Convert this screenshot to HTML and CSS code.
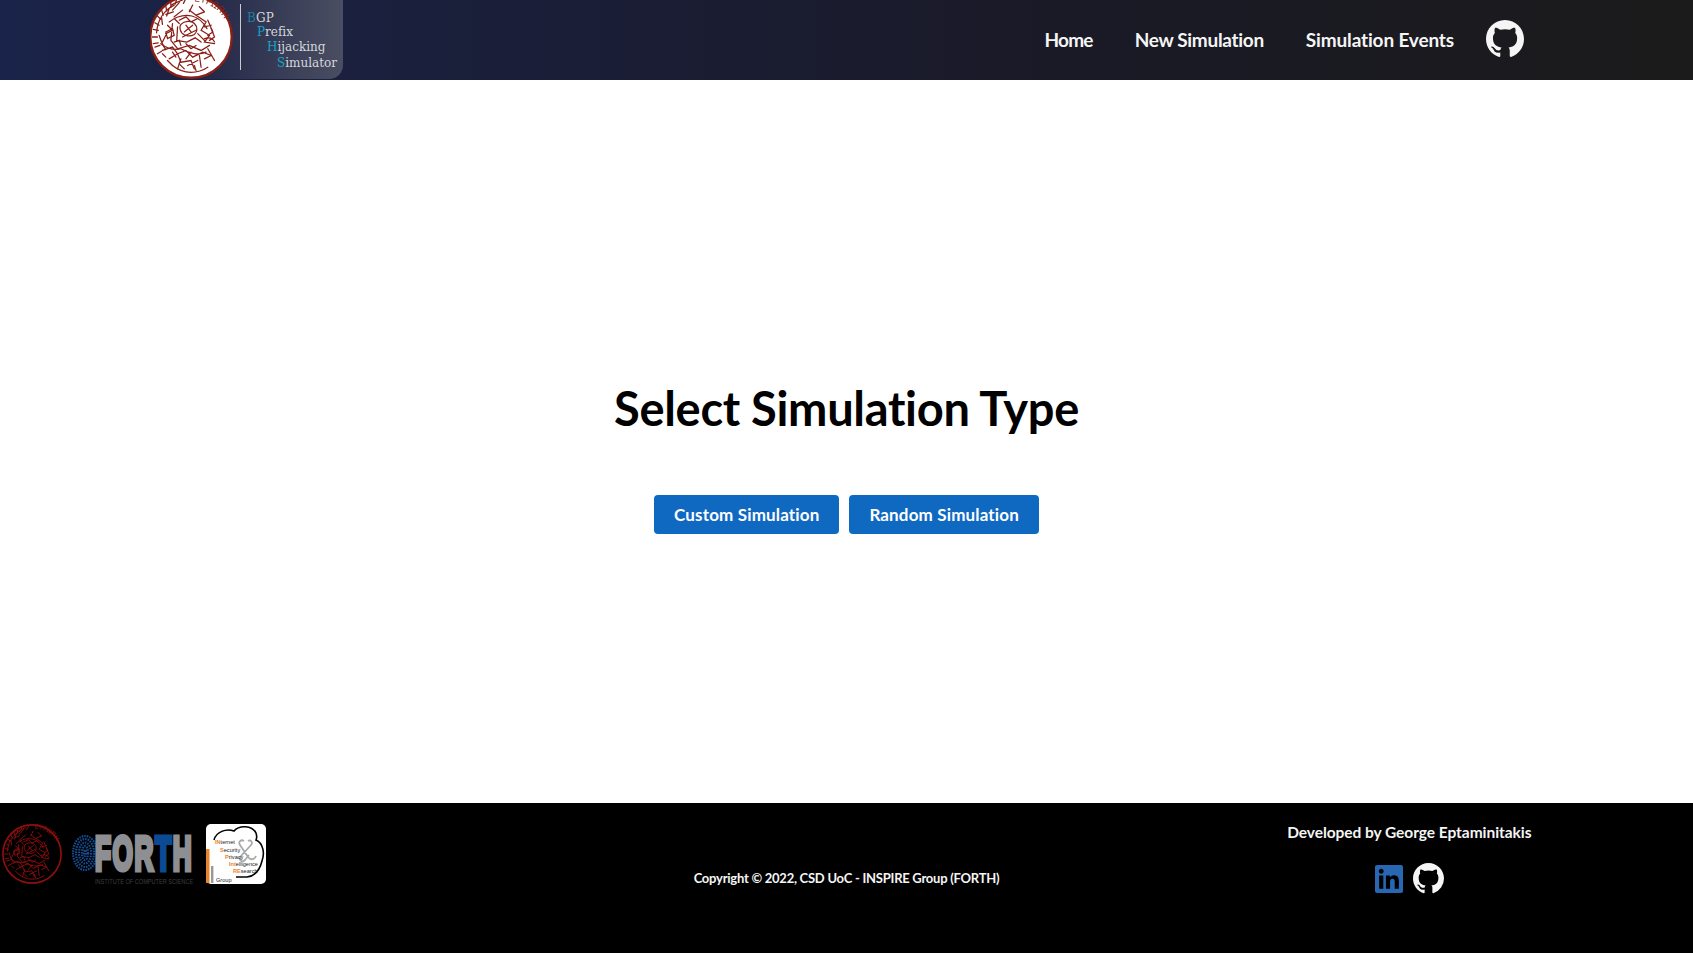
FILE: index.html
```html
<!DOCTYPE html>
<html lang="en">
<head>
<meta charset="utf-8">
<title>BGP Prefix Hijacking Simulator</title>
<link rel="stylesheet" href="styles.css">
</head>
<body>
<svg class="sprites" width="0" height="0" aria-hidden="true">
  <defs>
    <symbol id="gh" viewBox="0 0 16 16">
      <path fill-rule="evenodd" d="M8 0C3.58 0 0 3.58 0 8c0 3.54 2.29 6.53 5.47 7.59.4.07.55-.17.55-.38 0-.19-.01-.82-.01-1.49-2.01.37-2.53-.49-2.69-.94-.09-.23-.48-.94-.82-1.13-.28-.15-.68-.52-.01-.53.63-.01 1.08.58 1.23.82.72 1.21 1.87.87 2.33.66.07-.52.28-.87.51-1.07-1.78-.2-3.64-.89-3.64-3.95 0-.87.31-1.59.82-2.15-.08-.2-.36-1.02.08-2.12 0 0 .67-.21 2.2.82.64-.18 1.32-.27 2-.27.68 0 1.36.09 2 .27 1.53-1.04 2.2-.82 2.2-.82.44 1.1.16 1.92.08 2.12.51.56.82 1.27.82 2.15 0 3.07-1.87 3.75-3.65 3.95.29.25.54.73.54 1.48 0 1.07-.01 1.93-.01 2.2 0 .21.15.46.55.38A8.013 8.013 0 0016 8c0-4.42-3.58-8-8-8z"/>
    </symbol>
    <symbol id="seal" viewBox="0 0 100 100">
      <circle cx="50" cy="50" r="48.5" class="seal-bg" stroke-width="2.8"/>
      <g fill="none" stroke-width="1.5" stroke-linecap="round">
        <path d="M40 6c-5 2-9 3-13 6M33 5l-2 6M26 9l0 6M20 13l1 6M15 18l2 6M10 25l4 4M7 33l5 3M5 41l6 1M4 50l6 0M5 58l6-1M44 4l-3 6M7 62l6-2M10 70l5-3"/>
        <path d="M30 12C18 18 10 30 9 45M36 9l-8 9M24 16l-3 9M15 27l1 8M29 20l-9 3M12 48c2 6 4 12 8 17"/>
        <path d="M24 32c8-6 18-9 27-7 8 2 14 8 18 15M28 34l-2 20 8 10 14-4 14 6 10-6M34 38l-1 16 12 2 10-5 7 5M22 36l6 6-8 4M30 28l6 6"/>
        <path d="M38 35c4-4 12-5 16-1 4 4 4 10 0 13-5 3-12 2-15-2-2-3-3-7-1-10zM44 36l6 8M52 36l-10 8M40 50l16-8M36 30l8-4 6 6 8-4"/>
        <path d="M56 24l12 8-6 10 10 6-6 8 12 2M70 30l6 14-6 4M48 18l8 6 10-4M30 26l10-8M60 14l6 6M52 12l-4 8M66 38l8-2M58 46l8 8"/>
        <path d="M14 58c8 6 16 8 24 6 10 6 22 8 30 4M16 66l12-4 6 8 10-4 8 8 12-6 10 4M24 76l10-6 4 10 12-2 4 10M60 72l2 14M70 64l8 14M38 76l-4 12M46 84l12-6M28 68l4 6M50 68l-6 8M66 76l8-4"/>
        <path d="M20 44l8-4 2 8-8 4zM20 48l-4 8M66 52c6-2 10 0 12 4M74 40l4 10-6 4M30 56l6-2 2 6M44 58l6 6 6-4"/>
        <path d="M28 84c6 5 14 8 22 8 8 0 14-2 20-6M22 78l6 6M16 70l4 4M36 82l6 6M54 84l2 6"/>
      </g>
      <path id="seal-arc" d="M52 8A42 42 0 0 1 88 74" fill="none" stroke="none"/>
      <text class="seal-text" font-size="10.5"><textPath href="#seal-arc" startOffset="2">ΕΥΡΩΠΗ</textPath></text>
    </symbol>
  </defs>
</svg>

<header class="navbar">
  <a class="brand" href="#">
    <svg class="brand-logo" width="193" height="79" viewBox="0 0 193 79">
      <defs>
        <linearGradient id="brand-bg" x1="0" x2="1" y1="0" y2="0">
          <stop offset="0" stop-color="#1b2244" stop-opacity="0"/>
          <stop offset=".35" stop-color="#262b4a"/>
          <stop offset="1" stop-color="#4a4e62"/>
        </linearGradient>
      </defs>
      <path d="M0 0H193V65A14 14 0 0 1 179 79H0Z" fill="url(#brand-bg)"/>
      <use href="#seal" class="seal-light" x="-1" y="-5" width="84" height="84"/>
      <rect x="90" y="4" width="1" height="66" fill="#c9cbd2"/>
      <g class="brand-text">
        <text x="97" y="22"><tspan class="brand-cap-a">B</tspan>GP</text>
        <text x="107" y="36"><tspan class="brand-cap">P</tspan>refix</text>
        <text x="117" y="51"><tspan class="brand-cap">H</tspan>ijacking</text>
        <text x="127" y="67"><tspan class="brand-cap">S</tspan>imulator</text>
      </g>
    </svg>
  </a>
  <nav class="nav-links">
    <a class="nav-home" href="#">Home</a>
    <a href="#">New Simulation</a>
    <a class="nav-events" href="#">Simulation Events</a>
    <a class="nav-icon" href="#" aria-label="GitHub"><svg width="38" height="38"><use href="#gh"/></svg></a>
  </nav>
</header>

<main class="content">
  <h1>Select Simulation Type</h1>
  <div class="actions">
    <button class="btn" type="button">Custom Simulation</button>
    <button class="btn" type="button">Random Simulation</button>
  </div>
</main>

<footer class="footer">
  <div class="footer-logos">
    <svg class="logo-seal" width="60" height="60"><use href="#seal" class="seal-dark"/></svg>
    <svg class="logo-forth" width="124" height="76" viewBox="0 0 124 76">
      <g class="print" fill="none" stroke-width="2.2" stroke-dasharray="1.6 1">
        <ellipse cx="14" cy="30" rx="12" ry="17"/>
        <ellipse cx="14" cy="30" rx="9" ry="14"/>
        <ellipse cx="14" cy="30" rx="6" ry="10.5"/>
        <ellipse cx="14" cy="30" rx="3" ry="7"/>
        <ellipse cx="14" cy="30" rx="1" ry="3"/>
      </g>
      <text class="forth-word" transform="translate(24 46.5) scale(.535 1)">FOR<tspan class="forth-t">T</tspan>H</text>
      <text class="forth-sub" transform="translate(24 61) scale(.8 1)">INSTITUTE OF COMPUTER SCIENCE</text>
    </svg>
    <svg class="logo-group" width="60" height="60" viewBox="0 0 60 60">
      <rect width="60" height="60" rx="5" fill="#fff"/>
      <path d="M8 16C10 8 20 4 28 7c5-6 18-6 22 2 1 3 1 5 0 7 7 3 9 13 6 21-2 8-6 15-15 16H30" fill="none" stroke="#000" stroke-width="1.6"/>
      <rect x="0" y="25" width="3.5" height="34" fill="#e8852c"/>
      <rect x="5" y="42" width="2.4" height="17" fill="#999"/>
      <path d="M38 17c-3-2-6 1-4 4l8 12c3 4 7 2 8-1M42 17c3-2 5 2 3 4l-10 11c-3 4 1 7 4 4l4-5" fill="none" stroke="#aaa" stroke-width="1.8"/>
      <g class="group-text">
        <text x="9" y="20"><tspan class="group-cap">IN</tspan>ternet</text>
        <text x="14" y="28"><tspan class="group-cap">S</tspan>ecurity</text>
        <text x="19" y="35"><tspan class="group-cap">P</tspan>rivacy</text>
        <text x="23" y="42"><tspan class="group-cap">Int</tspan>elligence</text>
        <text x="27" y="49"><tspan class="group-cap">RE</tspan>search</text>
        <text x="10" y="58">Group</text>
      </g>
    </svg>
  </div>
  <p class="copyright">Copyright © 2022, CSD UoC - INSPIRE Group (FORTH)</p>
  <div class="credits">
    <p>Developed by George Eptaminitakis</p>
    <div class="credit-icons">
      <a href="#" aria-label="LinkedIn"><svg class="icon-in" width="28" height="28" viewBox="0 0 24 24"><path d="M20.447 20.452h-3.554v-5.569c0-1.328-.027-3.037-1.852-3.037-1.853 0-2.136 1.445-2.136 2.939v5.667H9.351V9h3.414v1.561h.046c.477-.9 1.637-1.85 3.37-1.85 3.601 0 4.267 2.37 4.267 5.455v6.286zM5.337 7.433c-1.144 0-2.063-.926-2.063-2.065 0-1.138.92-2.063 2.063-2.063 1.14 0 2.064.925 2.064 2.063 0 1.139-.925 2.065-2.064 2.065zm1.782 13.019H3.555V9h3.564v11.452zM22.225 0H1.771C.792 0 0 .774 0 1.729v20.542C0 23.227.792 24 1.771 24h20.451C23.2 24 24 23.227 24 22.271V1.729C24 .774 23.2 0 22.222 0h.003z"/></svg></a>
      <a href="#" aria-label="GitHub"><svg class="icon-gh" width="31" height="31"><use href="#gh"/></svg></a>
    </div>
  </div>
</footer>
</body>
</html>
```

FILE: styles.css
```css
* { box-sizing: border-box; }

html, body { height: 100%; }

body {
  margin: 0;
  min-height: 953px;
  display: flex;
  flex-direction: column;
  font-family: Lato, "Noto Sans", sans-serif;
  font-weight: 700;
  font-variant-ligatures: none;
  background: #fff;
  color: #000;
}

a { color: inherit; text-decoration: none; }
p { margin: 0; }

.sprites { position: absolute; }

/* navbar */
.navbar {
  flex: none;
  height: 80px;
  padding-left: 150px;
  padding-right: 169px;
  display: flex;
  align-items: flex-start;
  justify-content: space-between;
  background: linear-gradient(90deg, #1a2349 0%, #1a1a28 60%, #1b1b1b 100%);
  color: #f5f5f5;
}

.brand { display: block; height: 79px; }
.brand-logo { display: block; }

.brand-text text {
  font-family: "DejaVu Serif", serif;
  font-size: 12px;
  font-weight: 400;
  fill: #d5d7dc;
}
.brand-cap { fill: #12a3c6; }
.brand-cap-a { fill: #1c7f9f; }

.seal-light { color: #8a1f17; stroke: #8a1f17; --seal-fill: #fff; }
.seal-dark { color: #8f0f0f; stroke: #8f0f0f; --seal-fill: #000; }
.seal-bg { fill: var(--seal-fill); }
.seal-text {
  font-family: "DejaVu Sans", sans-serif;
  font-weight: 400;
  fill: currentColor;
  stroke: none;
}

.nav-links {
  height: 78px;
  display: flex;
  align-items: center;
  gap: 42px;
  font-size: 19px;
  letter-spacing: -.3px;
}
.nav-home { letter-spacing: -.8px; }
.nav-events { letter-spacing: -.15px; }

.nav-icon {
  display: flex;
  margin-left: -10px;
  fill: #f5f5f5;
}

/* main */
.content {
  flex: 1;
  display: flex;
  flex-direction: column;
  align-items: center;
  justify-content: center;
}

h1 {
  margin: 30px 0 58px;
  font-size: 47px;
  line-height: 58px;
  font-weight: 700;
  letter-spacing: -.3px;
}

.actions {
  display: flex;
  gap: 10px;
}

.btn {
  height: 39px;
  padding: 0 20px;
  border: 0;
  border-radius: 4px;
  background: #1069c1;
  color: #fff;
  font: inherit;
  font-size: 17px;
  letter-spacing: .15px;
}

/* footer */
.footer {
  flex: none;
  height: 150px;
  display: grid;
  grid-template-columns: 1fr 1fr 1fr;
  background: #000;
  color: #f5f5f5;
}

.footer-logos {
  padding: 21px 0 0 2px;
  display: flex;
  align-items: flex-start;
  gap: 8px;
}
.logo-forth { margin-top: -1px; margin-left: 1px; }
.logo-group { margin-left: 3px; }

.print { stroke: #154c92; }
.forth-word {
  font-family: "Liberation Sans", sans-serif;
  font-size: 49px;
  font-weight: 700;
  letter-spacing: 3px;
  fill: #8d8f92;
  stroke: #8d8f92;
  stroke-width: 5px;
}
.forth-t { fill: #0d4a94; stroke: #0d4a94; }
.forth-sub {
  font-family: "Liberation Sans", sans-serif;
  font-size: 7px;
  font-weight: 400;
  fill: #3f3f3f;
}
.group-text text {
  font-family: "Liberation Sans", sans-serif;
  font-size: 5.6px;
  font-weight: 400;
  fill: #222;
}
.group-cap { fill: #e8852c; font-weight: 700; }

.copyright {
  padding-top: 66px;
  text-align: center;
  font-size: 13px;
  line-height: 18px;
  letter-spacing: -.25px;
}

.credits {
  padding: 18px 3px 0 0;
  display: flex;
  flex-direction: column;
  align-items: center;
  font-size: 15.5px;
  line-height: 22px;
  letter-spacing: -.05px;
}

.credit-icons {
  margin-top: 20px;
  display: flex;
  align-items: center;
  gap: 10px;
}
.credit-icons a { display: flex; }
.icon-in { fill: #2867b2; }
.icon-gh { fill: #f5f5f5; }
```
